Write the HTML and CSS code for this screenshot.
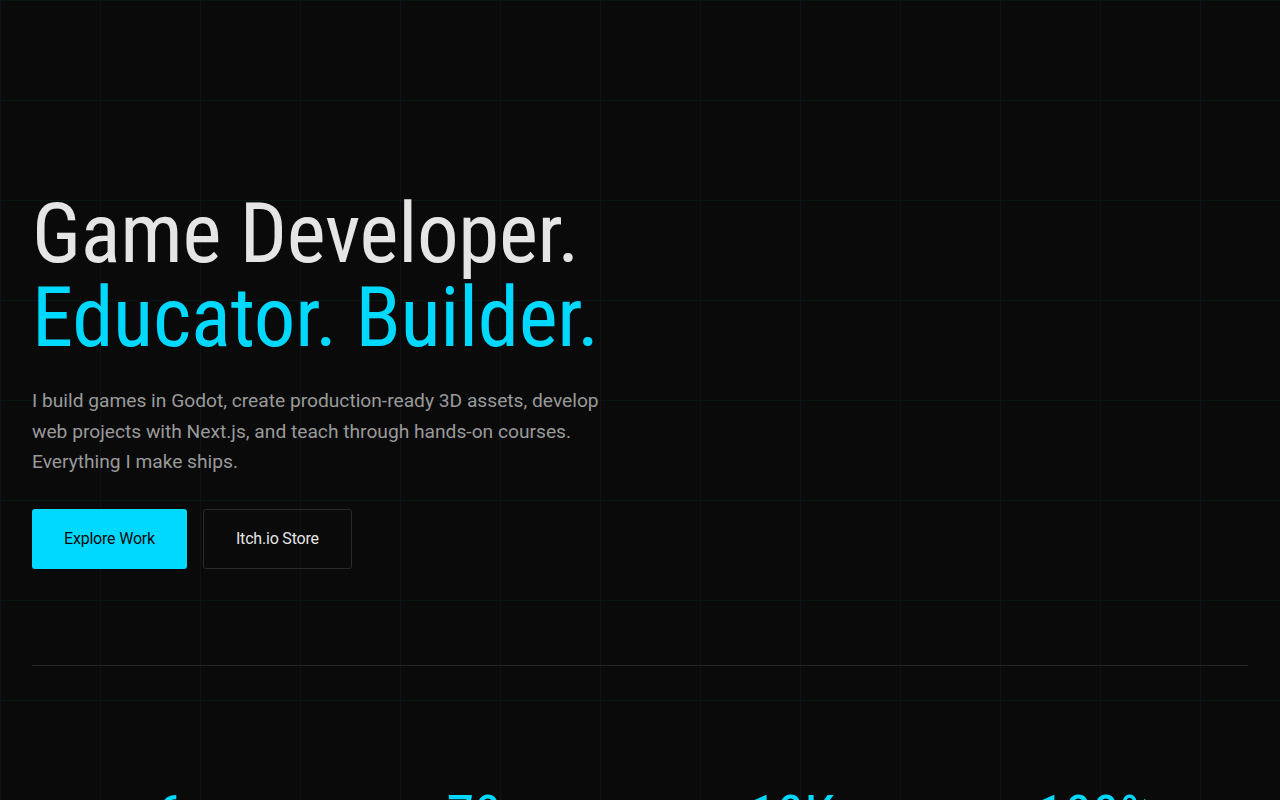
FILE: index.html
```html
<!DOCTYPE html>
<html lang="en">
<head>
<meta charset="utf-8">
<title>Game Developer. Educator. Builder.</title>
<link rel="stylesheet" href="styles.css">
</head>
<body>
<main class="page">
  <section class="hero">
    <h1 class="hero-title">
      <span class="line">Game Developer.</span>
      <span class="line accent">Educator. Builder.</span>
    </h1>
    <p class="hero-lead">I build games in Godot, create production-ready 3D assets, develop web projects with Next.js, and teach through hands-on courses. Everything I make ships.</p>
    <div class="actions">
      <a class="btn btn-primary" href="#work">Explore Work</a>
      <a class="btn btn-outline" href="#store">Itch.io Store</a>
    </div>
  </section>
  <hr class="divider">
  <section class="stats">
    <div class="stat"><div class="stat-num">6+</div><div class="stat-label">Games Shipped</div></div>
    <div class="stat"><div class="stat-num">70+</div><div class="stat-label">3D Assets</div></div>
    <div class="stat"><div class="stat-num">10K</div><div class="stat-label">Students</div></div>
    <div class="stat"><div class="stat-num">100%</div><div class="stat-label">Shipped</div></div>
  </section>
</main>
</body>
</html>
```

FILE: styles.css
```css
* { box-sizing: border-box; }
html, body {
  margin: 0;
  padding: 0;
}
body {
  background-color: #0a0a0a;
  background-image:
    linear-gradient(to right, rgba(0, 217, 255, 0.045) 1px, transparent 1px),
    linear-gradient(to bottom, rgba(0, 217, 255, 0.045) 1px, transparent 1px);
  background-size: 100px 100px;
  color: #e5e5e5;
  font-family: Roboto, "Liberation Sans", Arial, sans-serif;
  font-stretch: 75%;
  min-height: 100vh;
}
.page {
  padding: 0 32px;
}
.hero {
  padding-top: 192px;
  padding-bottom: 96px;
}
.hero-title {
  margin: 0;
  font-weight: 400;
  font-size: 83px;
  line-height: 84px;
  letter-spacing: -0.3px;
  color: #e5e5e5;
}
.hero-title .line { display: block; }
.hero-title .accent { color: #00d9ff; }
.hero-lead {
  margin: 26px 0 0;
  max-width: 600px;
  font-size: 19.2px;
  font-stretch: 100%;
  line-height: 30.6px;
  color: #9a9a9a;
}
.actions {
  display: flex;
  gap: 16px;
  margin-top: 31px;
}
.btn {
  display: inline-flex;
  align-items: center;
  justify-content: center;
  height: 60px;
  padding: 0 32px;
  border-radius: 3px;
  font-size: 16px;
  font-stretch: 100%;
  letter-spacing: -0.2px;
  text-decoration: none;
}
.btn-primary {
  background: #00d9ff;
  color: #0a0a0a;
}
.btn-outline {
  border: 1px solid #2a2a2a;
  color: #e5e5e5;
}
.divider {
  margin: 0;
  border: 0;
  border-top: 1px solid #262626;
}
.stats {
  display: grid;
  grid-template-columns: repeat(4, 1fr);
  padding-top: 122px;
  text-align: center;
}
.stat-num {
  font-size: 56px;
  line-height: 1;
  color: #00d9ff;
}
.stat-label {
  margin-top: 8px;
  font-size: 14px;
  color: #8a8a8a;
}
```
